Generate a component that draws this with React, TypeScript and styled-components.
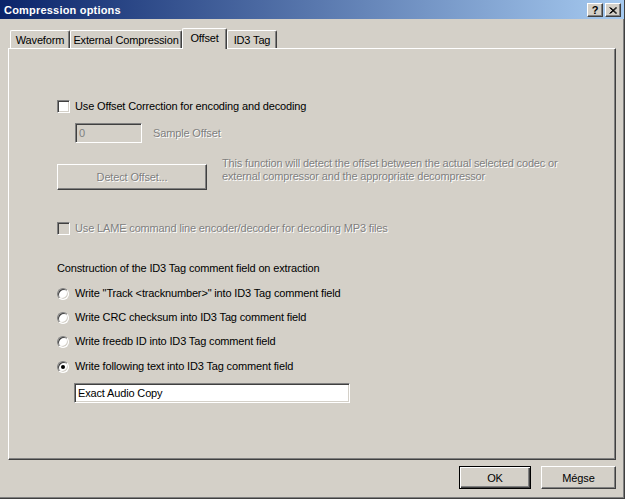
import styled, { createGlobalStyle } from "styled-components";

const GlobalStyle = createGlobalStyle`
  html, body {
    margin: 0;
    padding: 0;
    background: #d4d0c8;
  }
  body {
    font-family: "Liberation Sans", Arial, sans-serif;
    font-size: 11px;
    letter-spacing: -0.15px;
    color: #000;
  }
`;

const face = "#d4d0c8";
const shadow = "#808080";
const darkShadow = "#404040";

const Window = styled.div`
  box-sizing: border-box;
  width: 625px;
  height: 499px;
  overflow: hidden;
  display: flex;
  flex-direction: column;
  background: ${face};
  border-right: 1px solid ${darkShadow};
  border-bottom: 1px solid ${darkShadow};
  box-shadow: inset -1px -1px ${shadow};
`;

const TitleBar = styled.div`
  height: 19px;
  flex: none;
  display: flex;
  align-items: center;
  justify-content: space-between;
  padding: 0 3px 0 4px;
  background: linear-gradient(to right, #0a246a, #a6caf0);
`;

const Title = styled.span`
  color: #fff;
  font-weight: bold;
  font-size: 11px;
  letter-spacing: 0.2px;
`;

const TitleButtons = styled.div`
  display: flex;
  gap: 2px;
  padding-top: 1px;
`;

const TitleButton = styled.div`
  box-sizing: border-box;
  width: 16px;
  height: 14px;
  display: flex;
  align-items: center;
  justify-content: center;
  background: ${face};
  border-top: 1px solid #fff;
  border-left: 1px solid #fff;
  border-right: 1px solid ${darkShadow};
  border-bottom: 1px solid ${darkShadow};
  box-shadow: inset -1px -1px ${shadow};
  font-weight: bold;
  font-size: 11px;
  line-height: 1;
`;

const Body = styled.div`
  flex: 1;
  display: flex;
  flex-direction: column;
  padding: 9px 0 0 8px;
`;

const TabStrip = styled.div`
  display: flex;
  align-items: flex-end;
  height: 20px;
  padding-left: 2px;
  position: relative;
  z-index: 1;
`;

const Tab = styled.div<{ $w: number; $active?: boolean }>`
  box-sizing: border-box;
  width: ${(p) => p.$w}px;
  height: ${(p) => (p.$active ? 21 : 18)}px;
  margin-bottom: ${(p) => (p.$active ? -1 : 0)}px;
  display: flex;
  align-items: center;
  justify-content: center;
  padding-bottom: ${(p) => (p.$active ? 2 : 0)}px;
  background: ${face};
  border-top: 1px solid #fff;
  border-left: 1px solid #fff;
  border-right: 1px solid ${darkShadow};
  border-top-left-radius: 2px;
  border-top-right-radius: 2px;
  box-shadow: inset -1px 0 ${shadow};
  white-space: nowrap;
`;

const Panel = styled.div`
  box-sizing: border-box;
  width: 608px;
  height: 412px;
  display: flex;
  flex-direction: column;
  padding: 51px 0 0 48px;
  border-top: 1px solid #fff;
  border-left: 1px solid #fff;
  border-right: 1px solid ${darkShadow};
  border-bottom: 1px solid ${darkShadow};
  box-shadow: inset -1px -1px ${shadow};
`;

const Row = styled.div<{ $top: number; $indent?: number }>`
  display: flex;
  align-items: center;
  margin-top: ${(p) => p.$top}px;
  margin-left: ${(p) => p.$indent ?? 0}px;
  min-height: 13px;
  white-space: nowrap;
`;

const TopRow = styled(Row)`
  align-items: flex-start;
`;

const Label = styled.span<{ $disabled?: boolean }>`
  line-height: 13px;
  color: ${(p) => (p.$disabled ? shadow : "#000")};
  text-shadow: ${(p) => (p.$disabled ? "1px 1px 0 #fff" : "none")};
`;

const CheckBox = styled.div<{ $disabled?: boolean }>`
  box-sizing: border-box;
  width: 13px;
  height: 13px;
  flex: none;
  margin-right: 5px;
  background: ${(p) => (p.$disabled ? face : "#fff")};
  border-top: 1px solid ${shadow};
  border-left: 1px solid ${shadow};
  border-right: 1px solid #fff;
  border-bottom: 1px solid #fff;
  box-shadow: inset 1px 1px ${darkShadow}, inset -1px -1px ${face};
`;

const Radio = styled.div`
  box-sizing: border-box;
  position: relative;
  width: 12px;
  height: 12px;
  flex: none;
  margin-right: 6px;
  border-radius: 50%;
  background: #fff;
  border: 1px solid;
  border-color: ${shadow} #fff #fff ${shadow};
  box-shadow: inset 1px 1px ${darkShadow}, inset -1px -1px ${face};
`;

const RadioDot = styled.div`
  position: absolute;
  left: 3px;
  top: 3px;
  width: 4px;
  height: 4px;
  border-radius: 50%;
  background: #000;
`;

const TextField = styled.div<{ $w: number; $disabled?: boolean }>`
  box-sizing: border-box;
  width: ${(p) => p.$w}px;
  height: 20px;
  display: flex;
  align-items: center;
  padding-left: 3px;
  background: ${(p) => (p.$disabled ? face : "#fff")};
  color: ${(p) => (p.$disabled ? shadow : "#000")};
  border-top: 1px solid ${shadow};
  border-left: 1px solid ${shadow};
  border-right: 1px solid #fff;
  border-bottom: 1px solid #fff;
  box-shadow: inset 1px 1px ${darkShadow}, inset -1px -1px ${face};
`;

const FieldLabel = styled(Label)`
  margin-left: 11px;
`;

const PushButton = styled.div<{ $w: number; $h: number; $default?: boolean }>`
  box-sizing: border-box;
  width: ${(p) => p.$w}px;
  height: ${(p) => p.$h}px;
  display: flex;
  align-items: center;
  justify-content: center;
  background: ${face};
  border: 1px solid;
  border-color: ${(p) =>
    p.$default ? "#000" : `#fff ${darkShadow} ${darkShadow} #fff`};
  box-shadow: ${(p) =>
    p.$default
      ? `inset 1px 1px #fff, inset -1px -1px ${darkShadow}, inset -2px -2px ${shadow}`
      : `inset -1px -1px ${shadow}`};
`;

const DisabledButton = styled(PushButton)`
  flex: none;
  margin-top: 7px;
`;

const Description = styled(Label)`
  margin-left: 15px;
`;

const Footer = styled.div`
  display: flex;
  justify-content: flex-end;
  gap: 10px;
  width: 608px;
  margin-top: 6px;
`;

export default function App() {
  return (
    <Window>
      <GlobalStyle />
      <TitleBar>
        <Title>Compression options</Title>
        <TitleButtons>
          <TitleButton>?</TitleButton>
          <TitleButton>
            <svg width="8" height="7" viewBox="0 0 8 7">
              <path
                d="M0.5 0.5 L7 6.5 M7 0.5 L0.5 6.5 M1.5 0.5 L8 6.5 M8 0.5 L1.5 6.5"
                stroke="#000"
                strokeWidth="1"
              />
            </svg>
          </TitleButton>
        </TitleButtons>
      </TitleBar>
      <Body>
        <TabStrip>
          <Tab $w={60}>Waveform</Tab>
          <Tab $w={112}>External Compression</Tab>
          <Tab $w={45} $active>
            Offset
          </Tab>
          <Tab $w={50}>ID3 Tag</Tab>
        </TabStrip>
        <Panel>
          <Row $top={0}>
            <CheckBox />
            <Label>Use Offset Correction for encoding and decoding</Label>
          </Row>
          <Row $top={10} $indent={18}>
            <TextField $w={67} $disabled>
              0
            </TextField>
            <FieldLabel $disabled>Sample Offset</FieldLabel>
          </Row>
          <TopRow $top={14}>
            <DisabledButton $w={150} $h={26}>
              <Label $disabled>Detect Offset...</Label>
            </DisabledButton>
            <Description $disabled>
              This function will detect the offset between the actual selected
              codec or
              <br />
              external compressor and the appropriate decompressor
            </Description>
          </TopRow>
          <Row $top={32}>
            <CheckBox $disabled />
            <Label $disabled>
              Use LAME command line encoder/decoder for decoding MP3 files
            </Label>
          </Row>
          <Row $top={27}>
            <Label>Construction of the ID3 Tag comment field on extraction</Label>
          </Row>
          <Row $top={12}>
            <Radio />
            <Label>Write "Track &lt;tracknumber&gt;" into ID3 Tag comment field</Label>
          </Row>
          <Row $top={11}>
            <Radio />
            <Label>Write CRC checksum into ID3 Tag comment field</Label>
          </Row>
          <Row $top={11}>
            <Radio />
            <Label>Write freedb ID into ID3 Tag comment field</Label>
          </Row>
          <Row $top={12}>
            <Radio>
              <RadioDot />
            </Radio>
            <Label>Write following text into ID3 Tag comment field</Label>
          </Row>
          <Row $top={10} $indent={17}>
            <TextField $w={276}>Exact Audio Copy</TextField>
          </Row>
        </Panel>
        <Footer>
          <PushButton $w={72} $h={23} $default>
            OK
          </PushButton>
          <PushButton $w={75} $h={23}>
            Mégse
          </PushButton>
        </Footer>
      </Body>
    </Window>
  );
}
